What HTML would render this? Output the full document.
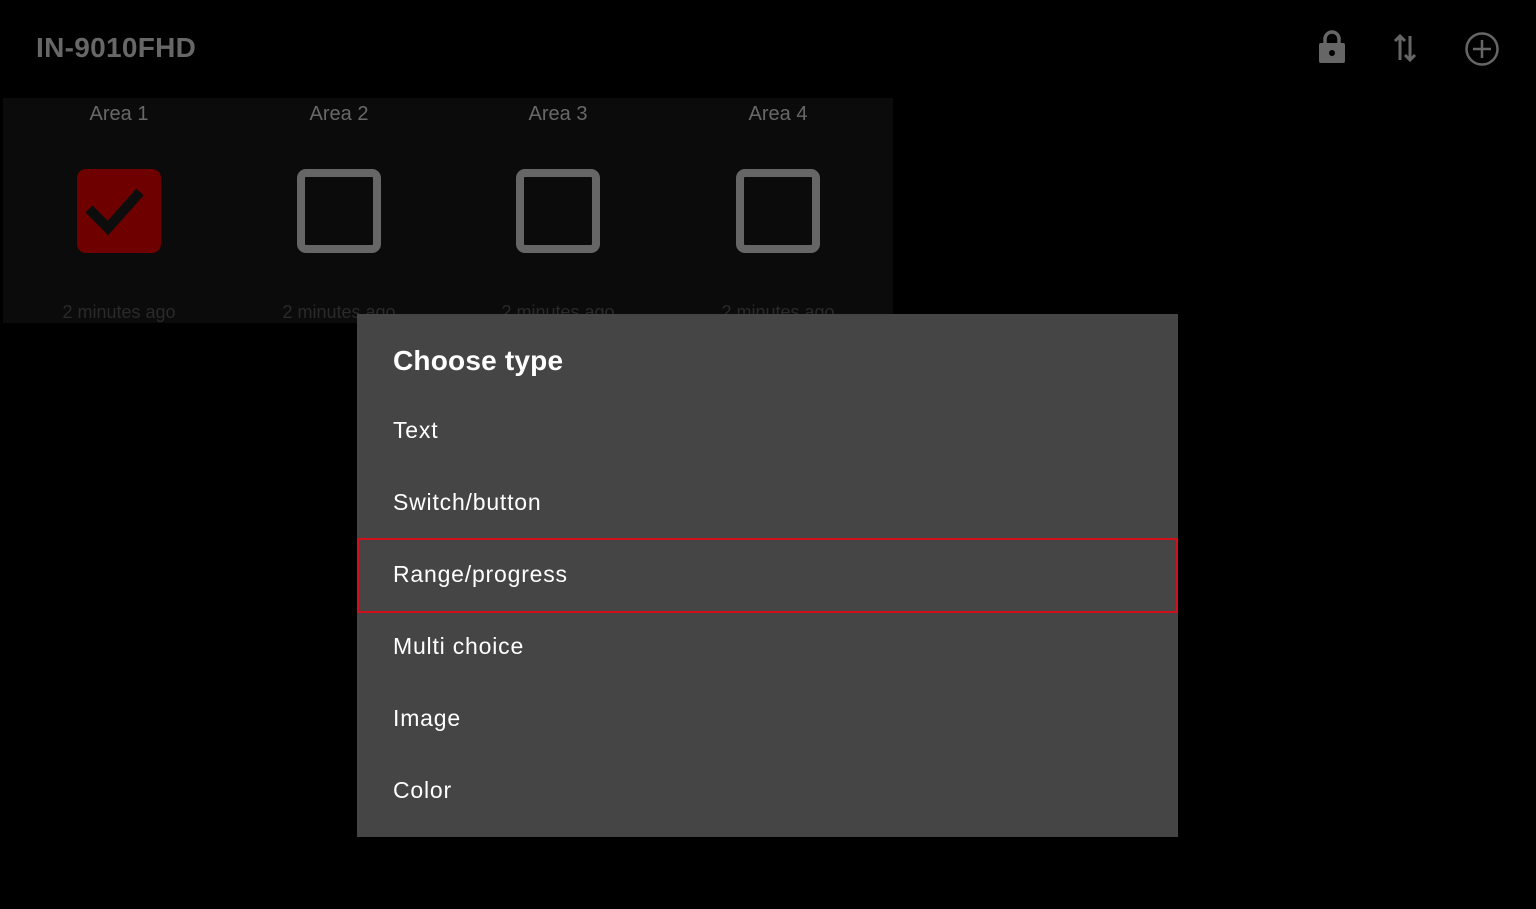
<!DOCTYPE html><html><head><style>
body{margin:0;width:1536px;height:909px;background:#000;position:relative;overflow:hidden;font-family:"Liberation Sans",sans-serif}
.t{position:absolute;left:36px;top:32px;font-size:28px;font-weight:bold;color:#676767;letter-spacing:0.3px}
.panel{position:absolute;left:3px;top:98px;width:890px;height:225px;background:#0b0b0b}
.col{position:absolute;top:0;width:220px;text-align:center}
.col .a{margin-top:5px;font-size:20px;color:#686868}
.box{position:absolute;top:71px;width:84px;height:84px;box-sizing:border-box;border:8px solid #666;border-radius:9px}
.chk{background:#6e0000;border:none}
.min{position:absolute;top:204px;width:220px;text-align:center;font-size:18px;color:#2a2a2a}
.dlg{position:absolute;left:357px;top:314px;width:821px;height:523px;background:#454545;color:#fff}
.dlg h1{position:absolute;left:36px;top:31px;margin:0;font-size:28px;font-weight:bold;letter-spacing:0.2px}
.it{position:absolute;left:36px;font-size:23px;letter-spacing:0.8px}
.hl{position:absolute;left:0;top:224px;width:821px;height:75px;box-sizing:border-box;border:2px solid #d0101a}
</style></head><body>
<div class="t">IN-9010FHD</div>
<svg style="position:absolute;left:1318px;top:30px" width="28" height="34" viewBox="0 0 28 34"><path d="M7 14V9a7 7 0 0 1 14 0v5" fill="none" stroke="#666" stroke-width="3.5"/><rect x="1" y="13" width="26" height="20" rx="2" fill="#666"/><circle cx="14" cy="23" r="3" fill="#000"/></svg>
<svg style="position:absolute;left:1392px;top:32px" width="26" height="32" viewBox="0 0 26 32"><path d="M8 28V4M3 9l5-5 5 5M18 4v24M13 23l5 5 5-5" fill="none" stroke="#666" stroke-width="3"/></svg>
<svg style="position:absolute;left:1464px;top:31px" width="36" height="36" viewBox="0 0 36 36"><circle cx="18" cy="18" r="15.5" fill="none" stroke="#666" stroke-width="2.5"/><path d="M18 9v18M9 18h18" stroke="#666" stroke-width="2.5"/></svg>
<div class="panel">
<div class="col" style="left:6px"><div class="a">Area 1</div></div>
<div class="col" style="left:226px"><div class="a">Area 2</div></div>
<div class="col" style="left:445px"><div class="a">Area 3</div></div>
<div class="col" style="left:665px"><div class="a">Area 4</div></div>
<div class="box chk" style="left:74px"><svg width="84" height="84"><path d="M12 40l19 19 32-36" fill="none" stroke="#0d0d0d" stroke-width="10"/></svg></div>
<div class="box" style="left:294px"></div>
<div class="box" style="left:513px"></div>
<div class="box" style="left:733px"></div>
<div class="min" style="left:6px">2 minutes ago</div>
<div class="min" style="left:226px">2 minutes ago</div>
<div class="min" style="left:445px">2 minutes ago</div>
<div class="min" style="left:665px">2 minutes ago</div>
</div>
<div class="dlg">
<h1>Choose type</h1>
<div class="it" style="top:103px">Text</div>
<div class="it" style="top:175px">Switch/button</div>
<div class="hl"></div>
<div class="it" style="top:247px">Range/progress</div>
<div class="it" style="top:319px">Multi choice</div>
<div class="it" style="top:391px">Image</div>
<div class="it" style="top:463px">Color</div>
</div>
</body></html>
